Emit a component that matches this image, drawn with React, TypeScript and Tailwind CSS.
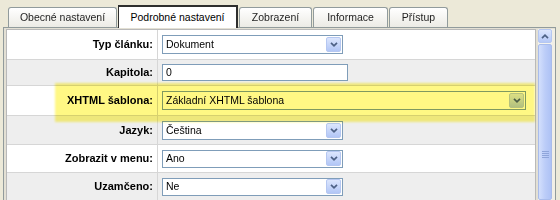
import React from 'react';

type Field = {
  label: string;
  value: string;
  kind: 'select' | 'input';
  width: number;
  rowH: string;
  bg: string;
  ctrlH: string;
};

const fields: Field[] = [
  { label: 'Typ článku:', value: 'Dokument', kind: 'select', width: 181, rowH: 'h-[30px]', bg: 'bg-white', ctrlH: 'h-[19px]' },
  { label: 'Kapitola:', value: '0', kind: 'input', width: 186, rowH: 'h-[26px]', bg: 'bg-[#EEEEEE]', ctrlH: 'h-[17px]' },
  { label: 'XHTML šablona:', value: 'Základní XHTML šablona', kind: 'select', width: 364, rowH: 'h-[30px]', bg: 'bg-white', ctrlH: 'h-[19px]' },
  { label: 'Jazyk:', value: 'Čeština', kind: 'select', width: 181, rowH: 'h-[29px]', bg: 'bg-[#EEEEEE]', ctrlH: 'h-[19px]' },
  { label: 'Zobrazit v menu:', value: 'Ano', kind: 'select', width: 181, rowH: 'h-[28px]', bg: 'bg-white', ctrlH: 'h-[18px]' },
  { label: 'Uzamčeno:', value: 'Ne', kind: 'select', width: 181, rowH: 'h-[28px]', bg: 'bg-[#EEEEEE]', ctrlH: 'h-[18px]' },
];

const tabs = [
  { name: 'Obecné nastavení', w: 'w-[109px]' },
  { name: 'Podrobné nastavení', w: 'w-[120px]', active: true },
  { name: 'Zobrazení', w: 'w-[73px]' },
  { name: 'Informace', w: 'w-[75px]' },
  { name: 'Přístup', w: 'w-[59px]' },
];

const DropBtn = () => (
  <div className="w-[15px] h-[15px] mr-[1px] shrink-0 rounded-[2px] border border-[#B5C7F1] bg-linear-to-b from-[#DCE6FD] to-[#B2C6F6] flex items-center justify-center">
    <svg width="8" height="5" viewBox="0 0 8 5">
      <path d="M1 0.8 L4 3.8 L7 0.8" stroke="#4D6185" strokeWidth="1.7" fill="none" />
    </svg>
  </div>
);

export default function App() {
  return (
    <div className="relative w-[560px] h-[200px] overflow-hidden bg-[#ECE9D8] font-['Tahoma','Liberation_Sans',Arial,sans-serif] text-black">
      {/* tabs */}
      <div className="flex items-end h-[27px] pl-[8px] gap-[1px]">
        {tabs.map(t =>
          t.active ? (
            <div
              key={t.name}
              className={`${t.w} relative z-10 -mb-px h-[23px] bg-white border-t-2 border-l border-r-2 border-[#2E2E2E] flex items-center justify-center text-[10.5px]`}
            >
              {t.name}
            </div>
          ) : (
            <div
              key={t.name}
              className={`${t.w} h-[20px] rounded-t-[3px] border border-b-0 border-[#919B9C] bg-linear-to-b from-white to-[#ECEBE5] flex items-center justify-center text-[10.5px] text-[#1E1E1E]`}
            >
              {t.name}
            </div>
          )
        )}
      </div>

      {/* panel */}
      <div className="ml-[3px] w-[553px] h-[173px] flex border-t border-l border-r border-[#919B9C] pl-[2px] pt-px bg-[#E3E0D4]">
        <div className="w-[530px] border-t border-l border-r border-[#B9B9B9] bg-white flex flex-col">
          {fields.map(f => (
            <div key={f.label} className={`${f.rowH} ${f.bg} shrink-0 flex border-b border-[#D6D6D6]`}>
              <div className="w-[151px] shrink-0 border-r border-[#D6D6D6] flex items-center justify-end pr-[4px] text-[11px] font-bold">
                {f.label}
              </div>
              <div className="flex-1 flex items-center pl-[4px]">
                {f.kind === 'select' ? (
                  <div
                    className={`${f.ctrlH} border border-[#7F9DB9] bg-white flex items-center`}
                    style={{ width: f.width }}
                  >
                    <span className="flex-1 pl-[3px] text-[10.5px] leading-none">{f.value}</span>
                    <DropBtn />
                  </div>
                ) : (
                  <div
                    className={`${f.ctrlH} border border-[#7F9DB9] bg-white flex items-center pl-[3px] text-[10.5px] leading-none`}
                    style={{ width: f.width }}
                  >
                    {f.value}
                  </div>
                )}
              </div>
            </div>
          ))}
        </div>

        {/* scrollbar */}
        <div className="ml-[2px] w-[14px] flex flex-col gap-[1px] bg-[#F4F3EE]">
          <div className="h-[14px] rounded-[2px] border border-[#B5C7F1] bg-linear-to-b from-[#DCE6FD] to-[#B6C9F7] flex items-center justify-center">
            <svg width="8" height="5" viewBox="0 0 8 5">
              <path d="M1 4.2 L4 1.2 L7 4.2" stroke="#4D6185" strokeWidth="1.7" fill="none" />
            </svg>
          </div>
          <div className="flex-1 rounded-[2px] border border-[#A9BCEB] bg-linear-to-r from-[#D3DFFC] via-[#BCCDF8] to-[#AEC2F5] pt-[106px] flex flex-col items-center gap-[1px]">
            <div className="w-[7px] h-px bg-[#8FA5DA]" />
            <div className="w-[7px] h-px bg-[#8FA5DA]" />
            <div className="w-[7px] h-px bg-[#8FA5DA]" />
            <div className="w-[7px] h-px bg-[#8FA5DA]" />
          </div>
        </div>
        <div className="flex-1 bg-[#F1EFE6]" />
      </div>

      {/* yellow marker highlight */}
      <div className="absolute left-[55px] top-[83px] w-[480px] h-[39px] bg-[#FFF884] mix-blend-multiply blur-[1px] pointer-events-none" />
    </div>
  );
}
